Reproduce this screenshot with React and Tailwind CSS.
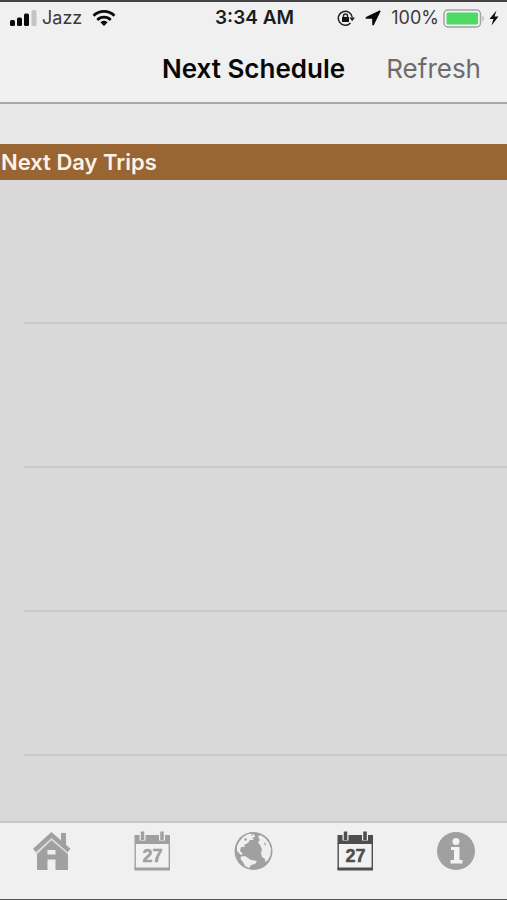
function SignalIcon() {
  return (
    <svg className="h-4 w-7" viewBox="0 0 28 16" aria-hidden="true">
      <rect x="0" y="10" width="5" height="6" rx="1.5" fill="#0a0a0a" />
      <rect x="7" y="7.500" width="5" height="8.500" rx="1.5" fill="#0a0a0a" />
      <rect x="14" y="3.500" width="5" height="12.500" rx="1.5" fill="#0a0a0a" />
      <rect x="21.500" y="0" width="5" height="16" rx="1.5" fill="#c4c4c4" />
    </svg>
  );
}

function WifiIcon() {
  return (
    <svg className="h-4 w-6" viewBox="0 0 24 16" fill="none" stroke="#0a0a0a" strokeWidth="2.8" aria-hidden="true">
      <path d="M1.500 5.700C7.500 0 16.500 0 22.500 5.700" />
      <path d="M5.300 10C9 6.200 15 6.200 18.700 10" />
      <path d="M8.300 12.300C10.500 10.200 13.500 10.200 15.700 12.300L12 16Z" fill="#0a0a0a" stroke="none" />
    </svg>
  );
}

function RotationLockIcon() {
  return (
    <svg className="h-[18px] w-[18px]" viewBox="0 0 18 18" fill="none" stroke="#222" strokeWidth="1.5" aria-hidden="true">
      <path d="M15.300 8.500A7 7 0 1 0 13.500 14" />
      <path d="M12.300 8.500H18L15.200 12.200Z" fill="#222" stroke="none" />
      <rect x="5" y="8" width="7" height="5" rx="0.5" fill="#111" stroke="none" />
      <path d="M6.500 8.500V7A2 2 0 0 1 10.500 7V8.500" />
    </svg>
  );
}

function LocationIcon() {
  return (
    <svg className="h-4 w-4" viewBox="0 0 16 16" fill="#0a0a0a" aria-hidden="true">
      <path d="M15.500 1.500Q15.800 0.200 14.500 0.600L1 7Q-0.200 8.300 1.500 8.800H7.200V14.500Q7.600 16 8.900 15Z" />
    </svg>
  );
}

function BatteryIcon() {
  return (
    <svg className="h-[19px] w-[42px]" viewBox="0 0 42 19" aria-hidden="true">
      <rect x="1" y="1" width="36.500" height="17" rx="4" fill="#f4f4f4" stroke="#a3a3a3" strokeWidth="1.500" />
      <rect x="3.500" y="3.500" width="31.500" height="12" rx="1.500" fill="#4cd964" />
      <path d="M39.500 6.500Q42 9.500 39.500 12.500Z" fill="#a3a3a3" />
    </svg>
  );
}

function BoltIcon() {
  return (
    <svg className="h-4 w-[10px]" viewBox="0 0 10 16" fill="#0a0a0a" aria-hidden="true">
      <path d="M7.500 0.500L0.500 9H4.500L2.500 15.500L9.500 6.500H5.500Z" />
    </svg>
  );
}

function HomeIcon() {
  return (
    <svg className="h-10 w-10" viewBox="0 0 40 40" aria-hidden="true">
      <path d="M30 2H35V18L30 13Z" fill="currentColor" />
      <path d="M20.500 9L6 23V39H16.500V28.500H24.500V39H37V23Z" fill="currentColor" />
      <path d="M3.500 19.500L20.500 4L38 19.500" fill="none" stroke="currentColor" strokeWidth="4.500" />
      <path d="M4.500 22.500L20.500 8.200L37 22.500" fill="none" stroke="#d8d8d8" strokeWidth="1.200" />
      <rect x="16.500" y="19" width="8" height="4.500" fill="#f0f0f0" />
    </svg>
  );
}

function CalendarIcon() {
  return (
    <svg className="h-10 w-10" viewBox="0 0 40 40" aria-hidden="true">
      <rect x="3" y="5" width="34" height="34" fill="#f2f2f2" />
      <path d="M2.500 4H38V13H2.500Z" fill="currentColor" />
      <path d="M3.200 12V38.500M37.300 12V38.500" stroke="currentColor" strokeWidth="1.400" />
      <rect x="2.500" y="36.500" width="35.500" height="3" fill="currentColor" />
      <path d="M10.500 0V9.500M30 0V9.500" stroke="#f0f0f0" strokeWidth="6" />
      <path d="M10.500 0.500V9M30 0.500V9" stroke="currentColor" strokeWidth="3.500" />
      <text
        x="20.500"
        y="31"
        textAnchor="middle"
        fill="currentColor"
        stroke="currentColor"
        strokeWidth="0.500"
        className="font-['Liberation_Sans',sans-serif] text-[18px] font-bold"
      >
        27
      </text>
    </svg>
  );
}

function GlobeIcon() {
  return (
    <svg className="h-10 w-10" viewBox="0 0 40 40" aria-hidden="true">
      <circle cx="20.500" cy="20" r="19" fill="currentColor" />
      <g fill="#efefef">
        <path d="M6 11L10 6L15 3L21 3L22 6L19 7L21 9L17 9L15 12L11 14L12 16L8 16L7 20L10 23L8 24L4 20L4 15Z" />
        <path d="M8 25.500L12 25L15 27L18 29L24 30L22 33L18 34L16 37L12 35L10 31L7.500 28Z" />
        <path d="M27 4L32 7L36 12L38 18L37.500 24L35 29L32 31L32 28L29 26L28 22L29 18L27 14L25 11L27 9L25 6Z" />
      </g>
      <path d="M11 8L13 7L14 9L12 10ZM18 4L20 3L20 5ZM31 11L33 13L32 15Z" fill="currentColor" />
    </svg>
  );
}

function InfoIcon() {
  return (
    <svg className="h-10 w-10" viewBox="0 0 40 40" aria-hidden="true">
      <circle cx="20" cy="20" r="19" fill="currentColor" />
      <circle cx="20" cy="10.500" r="3.500" fill="#f3f3f3" />
      <path d="M15 16H23.500V29H26.500V32.500H14.500V29H18V19H15Z" fill="#f3f3f3" />
    </svg>
  );
}

const tabs = [
  { label: "Home", Icon: HomeIcon },
  { label: "Today", Icon: CalendarIcon },
  { label: "World", Icon: GlobeIcon },
  { label: "Next schedule", Icon: CalendarIcon, active: true },
  { label: "Information", Icon: InfoIcon },
];

const rows = [1, 2, 3, 4];

export default function App() {
  return (
    <div className="flex min-h-screen flex-col border-t-2 border-b border-t-[#454547] border-b-[#555] bg-[#d9d9d9] font-['Inter',sans-serif]">
      <header className="border-b-2 border-[#a8a8a8] bg-[#f0f0f0]">
        <div className="flex h-8 items-center pr-2 pl-[10px] text-[#3a3a3a]">
          <div className="flex flex-1 items-center">
            <SignalIcon />
            <span className="mr-[10px] ml-1 text-lg">Jazz</span>
            <WifiIcon />
          </div>
          <time className="text-[19px] font-semibold text-[#1c1c1c]">3:34 AM</time>
          <div className="flex flex-1 items-center justify-end">
            <RotationLockIcon />
            <span className="mx-[10px] flex"><LocationIcon /></span>
            <span className="mr-1 text-lg">100%</span>
            <BatteryIcon />
            <span className="ml-1 flex"><BoltIcon /></span>
          </div>
        </div>
        <div className="grid h-[68px] grid-cols-[1fr_auto_1fr] items-center">
          <h1 className="col-start-2 text-[26px] font-semibold text-[#080808]">Next Schedule</h1>
          <button type="button" className="justify-self-end pr-[26px] text-[26px] text-[#6c6c6c]">Refresh</button>
        </div>
      </header>

      <main className="flex flex-1 flex-col">
        <div className="h-10 bg-[#e8e8e8]" />
        <h2 className="h-9 bg-[#996633] pl-px text-[22px] leading-9 font-semibold text-[#fbf3e9]">Next Day Trips</h2>
        <ul className="flex-1 pl-6">
          {rows.map((row) => (
            <li key={row} className="h-36 border-b-2 border-[#c9c9c9]" />
          ))}
        </ul>
      </main>

      <nav className="grid h-[78px] grid-cols-5 border-t-2 border-[#c8c8c8] bg-[#f0f0f0]">
        {tabs.map(({ label, Icon, active }) => (
          <button
            key={label}
            type="button"
            aria-label={label}
            aria-current={active ? "page" : undefined}
            className={active ? "flex justify-center pt-2 text-[#4e4e4e]" : "flex justify-center pt-2 text-[#a0a0a0]"}
          >
            <Icon />
          </button>
        ))}
      </nav>
    </div>
  );
}
